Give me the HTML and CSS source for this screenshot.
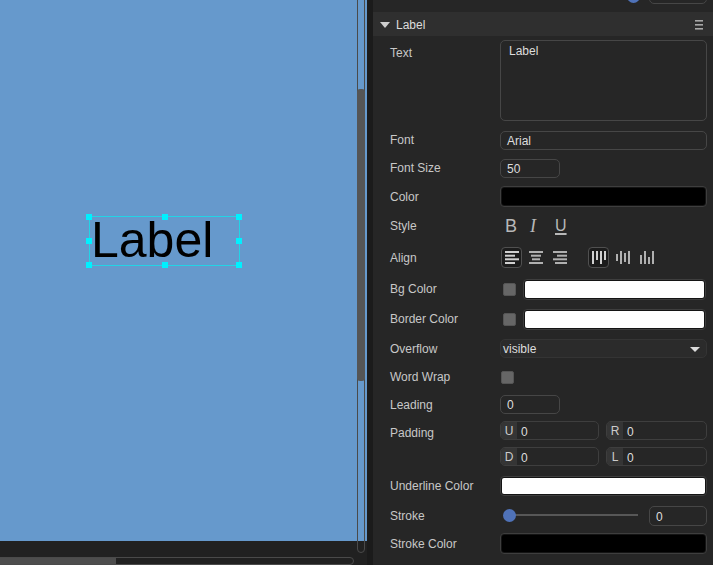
FILE: index.html
```html
<!DOCTYPE html>
<html>
<head>
<meta charset="utf-8">
<link rel="stylesheet" href="styles.css">
</head>
<body>
<div class="app">
  <div class="left">
    <div class="canvas">
      <div class="sel">
        <span class="node-text">Label</span>
        <i class="h h-tl"></i><i class="h h-tm"></i><i class="h h-tr"></i>
        <i class="h h-ml"></i><i class="h h-mr"></i>
        <i class="h h-bl"></i><i class="h h-bm"></i><i class="h h-br"></i>
      </div>
    </div>
    <div class="hbar">
      <div class="hscroll"><div class="hthumb"></div></div>
    </div>
    <div class="vscroll"><div class="vthumb"></div></div>
  </div>
  <div class="gutter"></div>
  <div class="panel">
    <div class="prev">
      <div class="knob prev-knob"></div>
      <div class="input prev-input"></div>
    </div>
    <div class="header">
      <svg class="tri" width="10" height="6" viewBox="0 0 10 6"><polygon points="0,0 10,0 5,6" fill="#cfcfcf"/></svg>
      <span class="htitle">Label</span>
      <svg class="menu" width="8" height="10" viewBox="0 0 8 10"><rect x="0" y="0" width="8" height="1.6" fill="#a8a8a8"/><rect x="0" y="4" width="8" height="1.6" fill="#a8a8a8"/><rect x="0" y="8" width="8" height="1.6" fill="#a8a8a8"/></svg>
    </div>
    <div class="props">
      <div class="lbl lbl-top">Text</div>
      <div class="textarea">Label</div>

      <div class="lbl">Font</div>
      <div class="input">Arial</div>

      <div class="lbl">Font Size</div>
      <div class="input short">50</div>

      <div class="lbl">Color</div>
      <div class="swatch"><div class="fill black"></div></div>

      <div class="lbl">Style</div>
      <div class="styles">
        <span class="sb b">B</span>
        <span class="sb it">I</span>
        <span class="sb u">U</span>
      </div>

      <div class="lbl">Align</div>
      <div class="align">
        <span class="ab on"><svg width="14" height="13" viewBox="0 0 14 13"><rect x="0" y="0" width="14" height="2"/><rect x="0" y="3.7" width="10" height="2"/><rect x="0" y="7.3" width="14" height="2"/><rect x="0" y="11" width="10" height="2"/></svg></span>
        <span class="ab"><svg width="14" height="13" viewBox="0 0 14 13"><rect x="0" y="0" width="14" height="2"/><rect x="2" y="3.7" width="10" height="2"/><rect x="3" y="7.3" width="8" height="2"/><rect x="0" y="11" width="14" height="2"/></svg></span>
        <span class="ab"><svg width="14" height="13" viewBox="0 0 14 13"><rect x="0" y="0" width="14" height="2"/><rect x="4" y="3.7" width="10" height="2"/><rect x="0" y="7.3" width="14" height="2"/><rect x="2" y="11" width="12" height="2"/></svg></span>
        <span class="ab on gap"><svg width="14" height="13" viewBox="0 0 14 13"><rect x="0" y="0" width="2" height="13"/><rect x="4" y="0" width="2" height="9"/><rect x="8" y="0" width="2" height="13"/><rect x="12" y="0" width="2" height="9"/></svg></span>
        <span class="ab"><svg width="14" height="13" viewBox="0 0 14 13"><rect x="0" y="3" width="2" height="7"/><rect x="4" y="0" width="2" height="13"/><rect x="8" y="2" width="2" height="9"/><rect x="12" y="0" width="2" height="13"/></svg></span>
        <span class="ab"><svg width="14" height="13" viewBox="0 0 14 13"><rect x="0" y="4" width="2" height="9"/><rect x="4" y="0" width="2" height="13"/><rect x="8" y="6" width="2" height="7"/><rect x="12" y="0" width="2" height="13"/></svg></span>
      </div>

      <div class="lbl">Bg Color</div>
      <div class="colorrow">
        <span class="check"></span>
        <div class="swatch thin"><div class="fill white"></div></div>
      </div>

      <div class="lbl">Border Color</div>
      <div class="colorrow">
        <span class="check"></span>
        <div class="swatch thin"><div class="fill white"></div></div>
      </div>

      <div class="lbl">Overflow</div>
      <div class="select">
        <span>visible</span>
        <svg width="10" height="5" viewBox="0 0 10 5"><polygon points="0,0 10,0 5,5" fill="#dcdcdc"/></svg>
      </div>

      <div class="lbl">Word Wrap</div>
      <div><span class="check ww"></span></div>

      <div class="lbl">Leading</div>
      <div class="input short">0</div>

      <div class="lbl lbl-pad">Padding</div>
      <div class="pad">
        <div class="pfield"><span class="k">U</span><span class="v">0</span></div>
        <div class="pfield"><span class="k">R</span><span class="v">0</span></div>
        <div class="pfield"><span class="k">D</span><span class="v">0</span></div>
        <div class="pfield"><span class="k">L</span><span class="v">0</span></div>
      </div>

      <div class="lbl">Underline Color</div>
      <div class="swatch ul"><div class="fill white"></div></div>

      <div class="lbl">Stroke</div>
      <div class="stroke">
        <div class="slider"><div class="track"></div><div class="knob"></div></div>
        <div class="input sval">0</div>
      </div>

      <div class="lbl">Stroke Color</div>
      <div class="swatch"><div class="fill black"></div></div>
    </div>
  </div>
</div>
</body>
</html>
```
FILE: styles.css
```css
html, body {
  margin: 0;
  padding: 0;
}
body {
  background: #262626;
  font-family: "Liberation Sans", Arial, sans-serif;
  font-size: 12px;
  color: #c8c8c8;
}
.app {
  display: flex;
  width: 713px;
  height: 565px;
  overflow: hidden;
}

/* ---------- left viewport ---------- */
.left {
  width: 367px;
  display: flex;
  flex-direction: column;
  position: relative;
}
.canvas {
  flex: 1;
  background: #6699cc;
  position: relative;
}
.hbar {
  height: 24px;
  background: #212121;
  position: relative;
}
.hscroll {
  position: absolute;
  left: -6px;
  top: 16px;
  width: 360px;
  height: 8px;
  box-sizing: border-box;
  border: 1px solid #4a4a4a;
  border-radius: 5px;
  overflow: hidden;
}
.hthumb {
  width: 121px;
  height: 100%;
  background: #4d4d4d;
}
.vscroll {
  position: absolute;
  left: 357px;
  top: -6px;
  width: 8px;
  height: 559px;
  box-sizing: border-box;
  border: 1px solid #4a4a4a;
  border-radius: 4px;
}
.vthumb {
  position: absolute;
  left: -1px;
  right: -1px;
  top: 94px;
  height: 292px;
  background: #555555;
  border-radius: 3px;
}
.gutter {
  width: 6px;
  background: #1b1b1b;
}

/* selection on canvas */
.sel {
  position: absolute;
  left: 89px;
  top: 216px;
  width: 151px;
  height: 50px;
  box-sizing: border-box;
  border: 1px solid #22d4e6;
}
.node-text {
  position: absolute;
  left: 1px;
  top: -2px;
  font-family: "Liberation Sans", Arial, sans-serif;
  font-size: 50px;
  line-height: 50px;
  color: #000;
  white-space: nowrap;
}
.h {
  position: absolute;
  width: 6px;
  height: 6px;
  background: #00f0ff;
}
.h-tl { left: -4px; top: -3px; }
.h-tm { left: 72px; top: -3px; }
.h-tr { left: 146px; top: -3px; }
.h-ml { left: -4px; top: 21px; }
.h-mr { left: 146px; top: 21px; }
.h-bl { left: -4px; top: 45px; }
.h-bm { left: 72px; top: 45px; }
.h-br { left: 146px; top: 45px; }

/* ---------- right panel ---------- */
.panel {
  width: 340px;
  background: #262626;
  display: flex;
  flex-direction: column;
}
.prev {
  height: 12px;
  display: flex;
  align-items: flex-end;
  overflow: hidden;
}
.prev-knob {
  margin-left: 254px;
  margin-bottom: 9px;
  flex: none;
}
.prev-input {
  width: 58px;
  height: 20px;
  margin-left: 9px;
  margin-bottom: 8px;
  flex: none;
}
.header {
  height: 24px;
  box-sizing: border-box;
  padding: 1px 10px 0 7px;
  background: #2f2f2f;
  display: flex;
  align-items: center;
}
.tri { flex: none; }
.htitle {
  margin-left: 6px;
  color: #dcdcdc;
}
.menu {
  margin-left: auto;
}

.props {
  display: grid;
  grid-template-columns: 110px 1fr;
  grid-template-rows: 89px 30px 26px 31px 27px 37px 26px 34px 25px 31px 25px 52px 33px 27px 29px;
  padding: 0 6px 0 17px;
  align-items: center;
}
.lbl {
  color: #c8c8c8;
  line-height: 14px;
  white-space: nowrap;
}
.lbl-top {
  align-self: start;
  padding-top: 10px;
}
.lbl-pad {
  align-self: start;
  padding-top: 9px;
}

.input {
  height: 19px;
  box-sizing: border-box;
  border: 1px solid #464646;
  border-radius: 5px;
  padding: 1px 6px 0;
  line-height: 17px;
  color: #dddddd;
}
.input.short {
  width: 60px;
}
.textarea {
  align-self: start;
  margin-top: 4px;
  height: 81px;
  box-sizing: border-box;
  border: 1px solid #464646;
  border-radius: 5px;
  padding: 3px 8px;
  line-height: 14px;
  color: #dddddd;
}

.swatch {
  height: 21px;
  box-sizing: border-box;
  border: 1px solid #3e3e3e;
  border-radius: 4px;
  padding: 1px;
  background: #141414;
}
.swatch.thin {
  flex: 1;
  height: 21px;
  margin-right: 1px;
}
.swatch.ul {
  height: 20px;
}
.fill {
  height: 100%;
  border-radius: 2px;
}
.fill.black { background: #000; }
.fill.white { background: #fff; }

.styles {
  display: flex;
  align-items: center;
  padding-left: 5px;
  padding-top: 1px;
  color: #b8b8b8;
}
.sb {
  width: 24px;
  line-height: 18px;
}
.sb.b {
  font-family: "Liberation Sans", Arial, sans-serif;
  font-size: 18px;
}
.sb.it {
  font-family: "Liberation Serif", "Times New Roman", serif;
  font-style: italic;
  font-size: 18px;
  padding-left: 1px;
}
.sb.u {
  font-family: "Liberation Sans", Arial, sans-serif;
  font-size: 16px;
  text-decoration: underline;
  text-underline-offset: 2px;
  text-decoration-thickness: 1.5px;
  padding-left: 1px;
}

.align {
  display: flex;
  align-items: center;
  padding-left: 1px;
}
.ab {
  width: 21px;
  height: 21px;
  box-sizing: border-box;
  border: 1px solid transparent;
  border-radius: 4px;
  display: flex;
  align-items: center;
  justify-content: center;
  margin-right: 3px;
  fill: #b0b0b0;
}
.ab.on {
  border-color: #505050;
  background: #1c1c1c;
  fill: #d0d0d0;
}
.ab.gap {
  margin-left: 15px;
}

.colorrow {
  display: flex;
  align-items: center;
  gap: 7px;
  padding-left: 3px;
}
.check {
  display: inline-block;
  width: 13px;
  height: 13px;
  box-sizing: border-box;
  background: #666666;
  border: 1px solid #555;
  border-radius: 2px;
  flex: none;
  vertical-align: middle;
}
.check.ww {
  margin-left: 1px;
}

.select {
  height: 19px;
  box-sizing: border-box;
  background: #2b2b2b;
  border: 1px solid #343434;
  border-radius: 5px;
  padding: 1px 6px 0 2px;
  display: flex;
  align-items: center;
  justify-content: space-between;
  color: #dddddd;
}

.pad {
  align-self: start;
  margin-top: 4px;
  display: grid;
  grid-template-columns: 99px 101px;
  column-gap: 7px;
  row-gap: 7px;
}
.pfield {
  display: flex;
  height: 19px;
  box-sizing: border-box;
  border: 1px solid #3e3e3e;
  border-radius: 5px;
  overflow: hidden;
  line-height: 18px;
}
.pfield .k {
  width: 16px;
  background: #353535;
  color: #cccccc;
  text-align: center;
}
.pfield .v {
  padding-left: 4px;
  padding-top: 1px;
  color: #dddddd;
}

.stroke {
  display: flex;
  align-items: center;
}
.slider {
  width: 138px;
  height: 13px;
  position: relative;
  flex: none;
}
.track {
  position: absolute;
  left: 9px;
  right: 0;
  top: 5px;
  height: 2px;
  background: #575757;
}
.knob {
  width: 13px;
  height: 13px;
  border-radius: 50%;
  background: #4f72b8;
}
.slider .knob {
  position: absolute;
  left: 3px;
  top: 0;
}
.sval {
  width: 58px;
  height: 20px;
  margin-left: 11px;
  line-height: 18px;
}
```
